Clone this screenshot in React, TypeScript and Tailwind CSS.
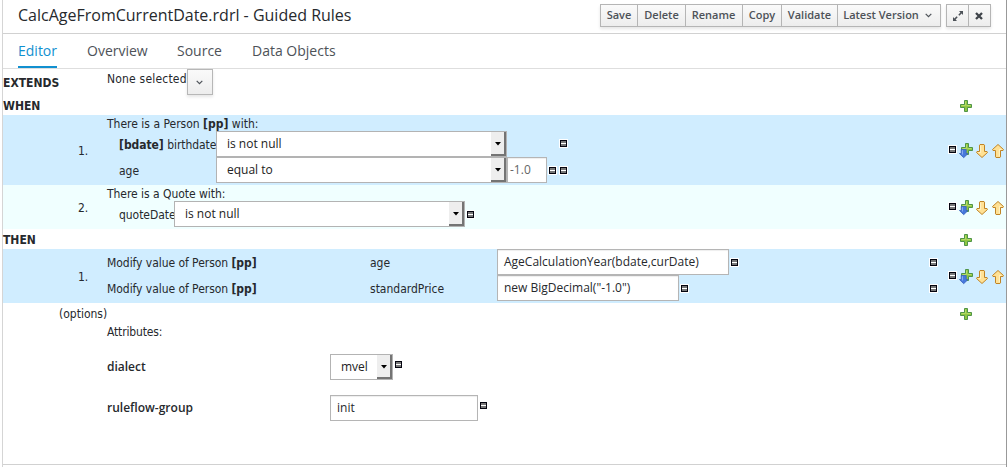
import type { ReactNode } from "react";

const tahoma = "font-['DejaVu_Sans_Condensed','DejaVu_Sans',sans-serif]";

function Remove({ className = "" }: { className?: string }) {
  return (
    <svg className={`block h-[9px] w-[9px] shrink-0 ${className}`} viewBox="0 0 9 9" shapeRendering="crispEdges">
      <rect width="9" height="9" fill="#fff" />
      <rect x="1" y="1" width="7" height="7" fill="#050510" />
      <rect x="2" y="2" width="5" height="5" fill="#777" />
      <rect x="2" y="4" width="5" height="1" fill="#fff" />
    </svg>
  );
}

function Plus({ className = "" }: { className?: string }) {
  return (
    <svg className={`block h-3 w-3 shrink-0 ${className}`} viewBox="0 0 12 12">
      <path d="M4.5 .5h3v4h4v3h-4v4h-3v-4h-4v-3h4z" fill="#8fc641" stroke="#4f9448" strokeLinejoin="round" />
      <path d="M5.5 1.5v4h-4M6.5 5.5h4" fill="none" stroke="#b5db66" />
    </svg>
  );
}

function PlusBelow() {
  return (
    <svg className="block h-4 w-[15px] shrink-0" viewBox="0 0 15 16">
      <path d="M6.5 .5h3v4h4v3h-4v4h-3v-4h-4v-3h4z" fill="#8fc641" stroke="#4f9448" strokeLinejoin="round" />
      <path d="M7.5 1.5v4h-4M8.5 5.5h4" fill="none" stroke="#b5db66" />
      <path d="M2.2 6.5h5v4H9L4.7 14.7.4 10.5h1.8z" fill="#4778dc" stroke="#3a62bd" strokeWidth=".8" />
      <path d="M3.5 7.2v4.3" stroke="#86aaf0" />
    </svg>
  );
}

function Arrow({ up = false }: { up?: boolean }) {
  return (
    <svg className={`block h-[14px] w-3 shrink-0 ${up ? "rotate-180" : ""}`} viewBox="0 0 12 14">
      <path d="M4 .5h4l.5.6v6.4h2.5l.5 1L6 13.5.5 8.5l.5-1h2.5V1.1z" fill="#ffe194" stroke="#c08426" strokeLinejoin="round" />
      <path d="M4.6 1.6v7H2.5" fill="none" stroke="#fff3c6" />
    </svg>
  );
}

function Actions() {
  return (
    <div className="flex">
      <Remove className="mt-[2px]" />
      <div className="ml-[2px]"><PlusBelow /></div>
      <div className="ml-[2px] mt-px"><Arrow /></div>
      <div className="ml-1 mt-px"><Arrow up /></div>
    </div>
  );
}

function Select({ children, className }: { children: ReactNode; className: string }) {
  return (
    <div className={`flex h-[26px] shrink-0 items-stretch border border-[#b3b3b3] bg-white pl-[10px] text-[12px] leading-[23px] text-[#222] ${className}`}>
      <span className="flex-1 whitespace-nowrap">{children}</span>
      <span className="flex w-[15px] items-center justify-center border-b-2 border-r-2 border-[#747474] bg-[#eee] pl-px pt-px">
        <svg className="h-1 w-[6px]" viewBox="0 0 6 4"><path d="M0 0h6L3 3.5z" fill="#000" /></svg>
      </span>
    </div>
  );
}

function Field({ children, className = "pl-[6px]" }: { children: ReactNode; className?: string }) {
  return (
    <div className={`h-[26px] shrink-0 whitespace-nowrap border border-[#b5b5b5] bg-white text-[12px] leading-[23px] shadow-[inset_0_1px_1px_rgba(0,0,0,0.07)] ${className}`}>
      {children}
    </div>
  );
}

function Button({ children, className }: { children: ReactNode; className: string }) {
  return (
    <button className={`flex h-full items-center justify-center whitespace-nowrap border-r border-[#b5b5b5] pb-px last:border-r-0 ${className}`}>
      {children}
    </button>
  );
}

const group = "flex h-[23px] border border-[#b5b5b5] bg-linear-to-b from-[#fafafa] to-[#ededed] shadow-[0_2px_3px_rgba(3,3,3,0.1)]";

function Chevron() {
  return <svg className="h-[5px] w-[7px]" viewBox="0 0 7 5"><path d="M.7.8 3.5 3.6 6.3.8" fill="none" stroke="#4d5258" strokeWidth="1.2" /></svg>;
}

function Heading({ children }: { children: ReactNode }) {
  return <span className="block text-[12px] font-bold leading-[14px]">{children}</span>;
}

function Modify({ field, value, width }: { field: string; value: string; width: string }) {
  return (
    <div className="flex h-[26px]">
      <span className="w-[263px] pt-[7px] tracking-[-0.05px]">Modify value of Person <b>[pp]</b></span>
      <span className="w-[127px] pt-[7px]">{field}</span>
      <Field className={`pl-[6px] font-['Open_Sans',sans-serif] ${width}`}>{value}</Field>
      <Remove className="ml-px mt-[9px]" />
      <Remove className="ml-auto mt-[9px]" />
    </div>
  );
}

export default function App() {
  return (
    <div className="flex h-[467px] w-[1007px] overflow-hidden bg-white pl-[2px] font-['Open_Sans',sans-serif] text-[#26292d]">
      <div className="flex w-[1005px] flex-col border-l border-r border-l-[#d5d5d5] border-r-[#999]">
        <header className="flex h-[34px] shrink-0 border-b border-[#d1d1d1] pl-[15px] pt-1">
          <h1 className="w-[582px] whitespace-nowrap text-[16px] leading-[22px]">CalcAgeFromCurrentDate.rdrl - Guided Rules</h1>
          <div className="flex text-[11px] font-semibold text-[#4d5258]">
            <div className={`w-[341px] ${group}`}>
              <Button className="w-[37px]">Save</Button>
              <Button className="w-[48px]">Delete</Button>
              <Button className="w-[57px] pr-px">Rename</Button>
              <Button className="w-[39px]">Copy</Button>
              <Button className="w-[56px]">Validate</Button>
              <Button className="flex-1 gap-[6px] pr-[3px]">Latest Version <Chevron /></Button>
            </div>
            <div className={`ml-[5px] w-[45px] ${group}`}>
              <Button className="w-[22px]">
                <svg className="mt-[2px] h-[10px] w-[10px]" viewBox="0 0 10 10" fill="#4d5258"><path d="M6 0h4v4L8.6 2.6 6.4 4.8l-1.1-1L7.4 1.5zM0 6l1.4 1.4 2.2-2.2 1.1 1L2.6 8.5 4 10H0z" /></svg>
              </Button>
              <Button className="flex-1 pr-px">
                <svg className="mt-[2px] h-2 w-2" viewBox="0 0 8 8"><path d="m1 1 6 6M7 1 1 7" stroke="#3f444a" strokeWidth="2.3" /></svg>
              </Button>
            </div>
          </div>
        </header>

        <nav className="flex h-[35px] shrink-0 gap-[30px] border-b border-[#dedede] pl-[15px] text-[14px] leading-[20px] text-[#4d5258]">
          <span className="w-[39px] border-b-2 border-[#1190d0] pt-[7px] text-[#1190d0]">Editor</span>
          <span className="w-[60px] pt-[7px]">Overview</span>
          <span className="w-[45px] pt-[7px]">Source</span>
          <span className="whitespace-nowrap pt-[7px]">Data Objects</span>
        </nav>

        <main className={`flex flex-col whitespace-nowrap text-[12px] leading-[14px] ${tahoma}`}>
          <div className="flex h-7">
            <div className="w-[104px] pt-[7px]"><Heading>EXTENDS</Heading></div>
            <span className="w-[80px] pt-[3px] tracking-[0.2px]">None selected</span>
            <button className="flex h-[26px] w-[26px] items-center justify-center border border-[#b7b7b7] bg-linear-to-b from-[#fafafa] to-[#ededed] pr-px shadow-[0_2px_3px_rgba(3,3,3,0.1)]"><Chevron /></button>
          </div>
          <div className="flex h-[18px]">
            <div className="w-[957px] pt-[2px]"><Heading>WHEN</Heading></div>
            <Plus className="mt-[3px]" />
          </div>

          <section className="flex h-[70px] bg-[#d0edff]">
            <span className="w-[104px] pl-[75px] pt-[29px]">1.</span>
            <div className="w-[841px] pt-[2px]">
              <p>There is a Person <b>[pp]</b> with:</p>
              <div className="flex h-[26px] pl-[12px]">
                <span className="w-[97px] pt-[7px] tracking-[-0.05px]"><b>[bdate]</b> birthdate</span>
                <Select className="w-[291px] font-['Open_Sans',sans-serif]">is not null</Select>
                <Remove className="ml-[52px] mt-[8px]" />
              </div>
              <div className="flex h-[26px] pl-[12px]">
                <span className="w-[97px] pt-[7px]">age</span>
                <Select className="w-[291px] font-['Open_Sans',sans-serif]">equal to</Select>
                <Field className="w-10 pl-[2px] font-['Open_Sans',sans-serif] text-[#666]">-1.0</Field>
                <Remove className="ml-px mt-[9px]" />
                <Remove className="ml-[2px] mt-[9px]" />
              </div>
            </div>
            <div className="pt-7"><Actions /></div>
          </section>

          <section className="flex h-11 bg-[#f0ffff]">
            <span className="w-[104px] pl-[75px] pt-[16px]">2.</span>
            <div className="w-[841px] pt-[2px]">
              <p className="tracking-[-0.04px]">There is a Quote with:</p>
              <div className="flex h-[26px] pl-[12px]">
                <span className="w-[55px] pt-[7px] tracking-[-0.05px]">quoteDate</span>
                <Select className="w-[291px] font-['Open_Sans',sans-serif]">is not null</Select>
                <Remove className="ml-px mt-[9px]" />
              </div>
            </div>
            <div className="pt-[15px]"><Actions /></div>
          </section>

          <div className="flex h-5">
            <div className="w-[957px] pt-1"><Heading>THEN</Heading></div>
            <Plus className="mt-[5px]" />
          </div>

          <section className="flex h-[54px] bg-[#d0edff]">
            <span className="w-[104px] pl-[75px] pt-[21px]">1.</span>
            <div className="w-[831px]">
              <Modify field="age" value="AgeCalculationYear(bdate,curDate)" width="w-[232px]" />
              <Modify field="standardPrice" value={'new BigDecimal("-1.0")'} width="w-[182px]" />
            </div>
            <div className="pl-[10px] pt-5"><Actions /></div>
          </section>

          <div className="flex h-[22px]">
            <span className="w-[957px] pl-[56px] pt-1">(options)</span>
            <Plus className="mt-[5px]" />
          </div>
          <div className="h-[29px] pl-[104px] tracking-[-0.15px]">Attributes:</div>
          <div className="flex h-[41px] pl-[104px] font-['Open_Sans',sans-serif]">
            <span className="w-[223px] pt-[6px] font-semibold">dialect</span>
            <Select className="w-[63px]">mvel</Select>
            <Remove className="ml-px mt-[6px]" />
          </div>
          <div className="flex h-[69px] pl-[104px] font-['Open_Sans',sans-serif]">
            <span className="w-[223px] pt-[6px] font-semibold">ruleflow-group</span>
            <Field className="w-[148px] pl-[6px]">init</Field>
            <Remove className="ml-px mt-[6px]" />
          </div>
          <div className="border-t border-[#d1d1d1]" />
        </main>
      </div>
    </div>
  );
}
